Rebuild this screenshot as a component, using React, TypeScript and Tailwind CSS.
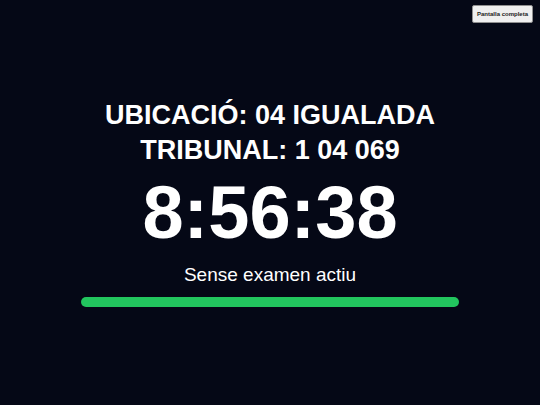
import React from "react";

export default function App() {
  return (
    <div
      className="relative flex h-screen w-full flex-col items-center justify-center bg-[#050816] text-white"
      style={{ fontFamily: '"Liberation Sans", Arial, sans-serif' }}
    >
      <button className="absolute right-[7px] top-[5px] flex h-[18px] w-[61px] items-center justify-center rounded-[2px] border border-[#8f8f8f] bg-[#efefef] text-[6px] font-semibold text-[#222]">
        Pantalla completa
      </button>
      <div className="text-center text-[27px] font-bold leading-[35px]">
        <div>UBICACIÓ: 04 IGUALADA</div>
        <div>TRIBUNAL: 1 04 069</div>
      </div>
      <div className="mt-[8px] text-[74px] font-bold leading-[74px]">8:56:38</div>
      <div className="mt-[11px] text-[19px] leading-[28px]">Sense examen actiu</div>
      <div className="mt-[8px] h-[10px] w-[378px] rounded-full bg-[#22c55e]" />
    </div>
  );
}
